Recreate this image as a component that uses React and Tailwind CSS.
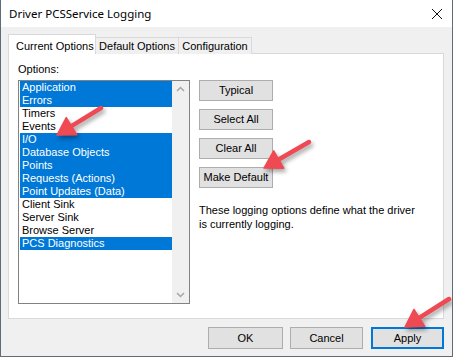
import React from "react";

const items = [
	{ label: "Application", on: true },
	{ label: "Errors", on: true },
	{ label: "Timers", on: false },
	{ label: "Events", on: false },
	{ label: "I/O", on: true },
	{ label: "Database Objects", on: true },
	{ label: "Points", on: true },
	{ label: "Requests (Actions)", on: true },
	{ label: "Point Updates (Data)", on: true },
	{ label: "Client Sink", on: false },
	{ label: "Server Sink", on: false },
	{ label: "Browse Server", on: false },
	{ label: "PCS Diagnostics", on: true },
];

const sideButtons = ["Typical", "Select All", "Clear All", "Make Default"];

// red callout arrow, tail -> tip
const Arrow = ({ x1, y1, x2, y2 }) => {
	const a = Math.atan2(y2 - y1, x2 - x1);
	const len = 17;
	const w = 10;
	const bx = x2 - Math.cos(a) * len;
	const by = y2 - Math.sin(a) * len;
	const px = Math.sin(a) * w;
	const py = -Math.cos(a) * w;
	return (
		<g>
			<line x1={x1} y1={y1} x2={bx + Math.cos(a) * 2} y2={by + Math.sin(a) * 2} stroke="#ef4a54" strokeWidth="4.5" strokeLinecap="round" />
			<polygon
				points={`${x2},${y2} ${bx + px},${by + py} ${bx - px},${by - py}`}
				fill="#ef4a54"
				stroke="#ef4a54"
				strokeWidth="1.5"
				strokeLinejoin="round"
			/>
		</g>
	);
};

const App = () => {
	return (
		<div
			className="relative w-[453px] h-[357px] overflow-hidden bg-[#f0f0f0] border-l border-r border-b border-[#5f6b78] text-black"
			style={{ fontFamily: '"Liberation Sans", Arial, sans-serif' }}>
			{/* title bar */}
			<div className="h-[27px] bg-white flex items-center justify-between pl-[8px] pr-[9px]">
				<span className="text-[11.5px]" style={{ fontFamily: '"Noto Sans", sans-serif' }}>
					Driver PCSService Logging
				</span>
				<svg width="12" height="12" viewBox="0 0 12 12">
					<path d="M1 1 L11 11 M11 1 L1 11" stroke="#111" strokeWidth="1" />
				</svg>
			</div>

			{/* tabs */}
			<div className="flex items-end pl-[7px] mt-[7px] h-[20px] text-[11px]">
				<div className="relative z-10 h-[20px] w-[88px] bg-white border border-b-0 border-[#d9d9d9] flex items-start pt-[3px] pl-[7px]">
					Current Options
				</div>
				<div className="h-[17px] w-[83px] bg-[#f0f0f0] border border-l-0 border-b-0 border-[#d9d9d9] flex items-center justify-center">
					Default Options
				</div>
				<div className="h-[17px] w-[73px] bg-[#f0f0f0] border border-l-0 border-b-0 border-[#d9d9d9] flex items-center justify-center">
					Configuration
				</div>
			</div>

			{/* panel */}
			<div className="ml-[7px] -mt-px w-[436px] h-[266px] bg-white border border-[#d9d9d9] pl-[9px] pt-[9px] text-[11px]">
				<div className="h-[13px] leading-[13px]">Options:</div>
				<div className="flex mt-[4px]">
					{/* listbox */}
					<div className="w-[172px] h-[224px] border border-[#828282] flex">
						<div className="flex-1 pl-px">
							{items.map((it) => (
								<div
									key={it.label}
									className={`h-[13px] leading-[13px] pl-[2px] whitespace-nowrap ${it.on ? "bg-[#0078d7] text-white" : ""}`}>
									{it.label}
								</div>
							))}
						</div>
						<div className="w-[17px] bg-[#f0f0f0] flex flex-col justify-between items-center py-[5px]">
							<svg width="9" height="6" viewBox="0 0 9 6">
								<path d="M1 5 L4.5 1.5 L8 5" stroke="#a6a6a6" strokeWidth="1.5" fill="none" />
							</svg>
							<svg width="9" height="6" viewBox="0 0 9 6">
								<path d="M1 1 L4.5 4.5 L8 1" stroke="#a6a6a6" strokeWidth="1.5" fill="none" />
							</svg>
						</div>
					</div>

					{/* side column */}
					<div className="ml-[9px] flex flex-col">
						{sideButtons.map((b) => (
							<button
								key={b}
								type="button"
								className="w-[74px] h-[21px] mb-[8px] bg-[#e1e1e1] border border-[#adadad] text-[11px] leading-none">
								{b}
							</button>
						))}
						<p className="mt-[7px] w-[230px] leading-[14px] text-[11px]">
							These logging options define what the driver
							<br />
							is currently logging.
						</p>
					</div>
				</div>
			</div>

			{/* dialog buttons */}
			<div className="flex justify-end gap-[7px] pr-[8px] mt-[8px] text-[11px]">
				<button type="button" className="w-[75px] h-[22px] bg-[#e1e1e1] border border-[#adadad]">
					OK
				</button>
				<button type="button" className="w-[73px] h-[22px] bg-[#e1e1e1] border border-[#adadad]">
					Cancel
				</button>
				<button type="button" className="w-[73px] h-[22px] ml-[1px] bg-[#e1e1e1] border-2 border-[#0078d7]">
					Apply
				</button>
			</div>

			{/* callouts */}
			<svg
				className="absolute left-0 top-0 pointer-events-none"
				width="453"
				height="357"
				style={{ filter: "drop-shadow(2px 3px 2px rgba(0,0,0,0.35))" }}>
				<Arrow x1={100} y1={108} x2={56} y2={135} />
				<Arrow x1={308} y1={142} x2={263} y2={168} />
				<Arrow x1={448} y1={299} x2={404} y2={327} />
			</svg>
		</div>
	);
};

export default App;
